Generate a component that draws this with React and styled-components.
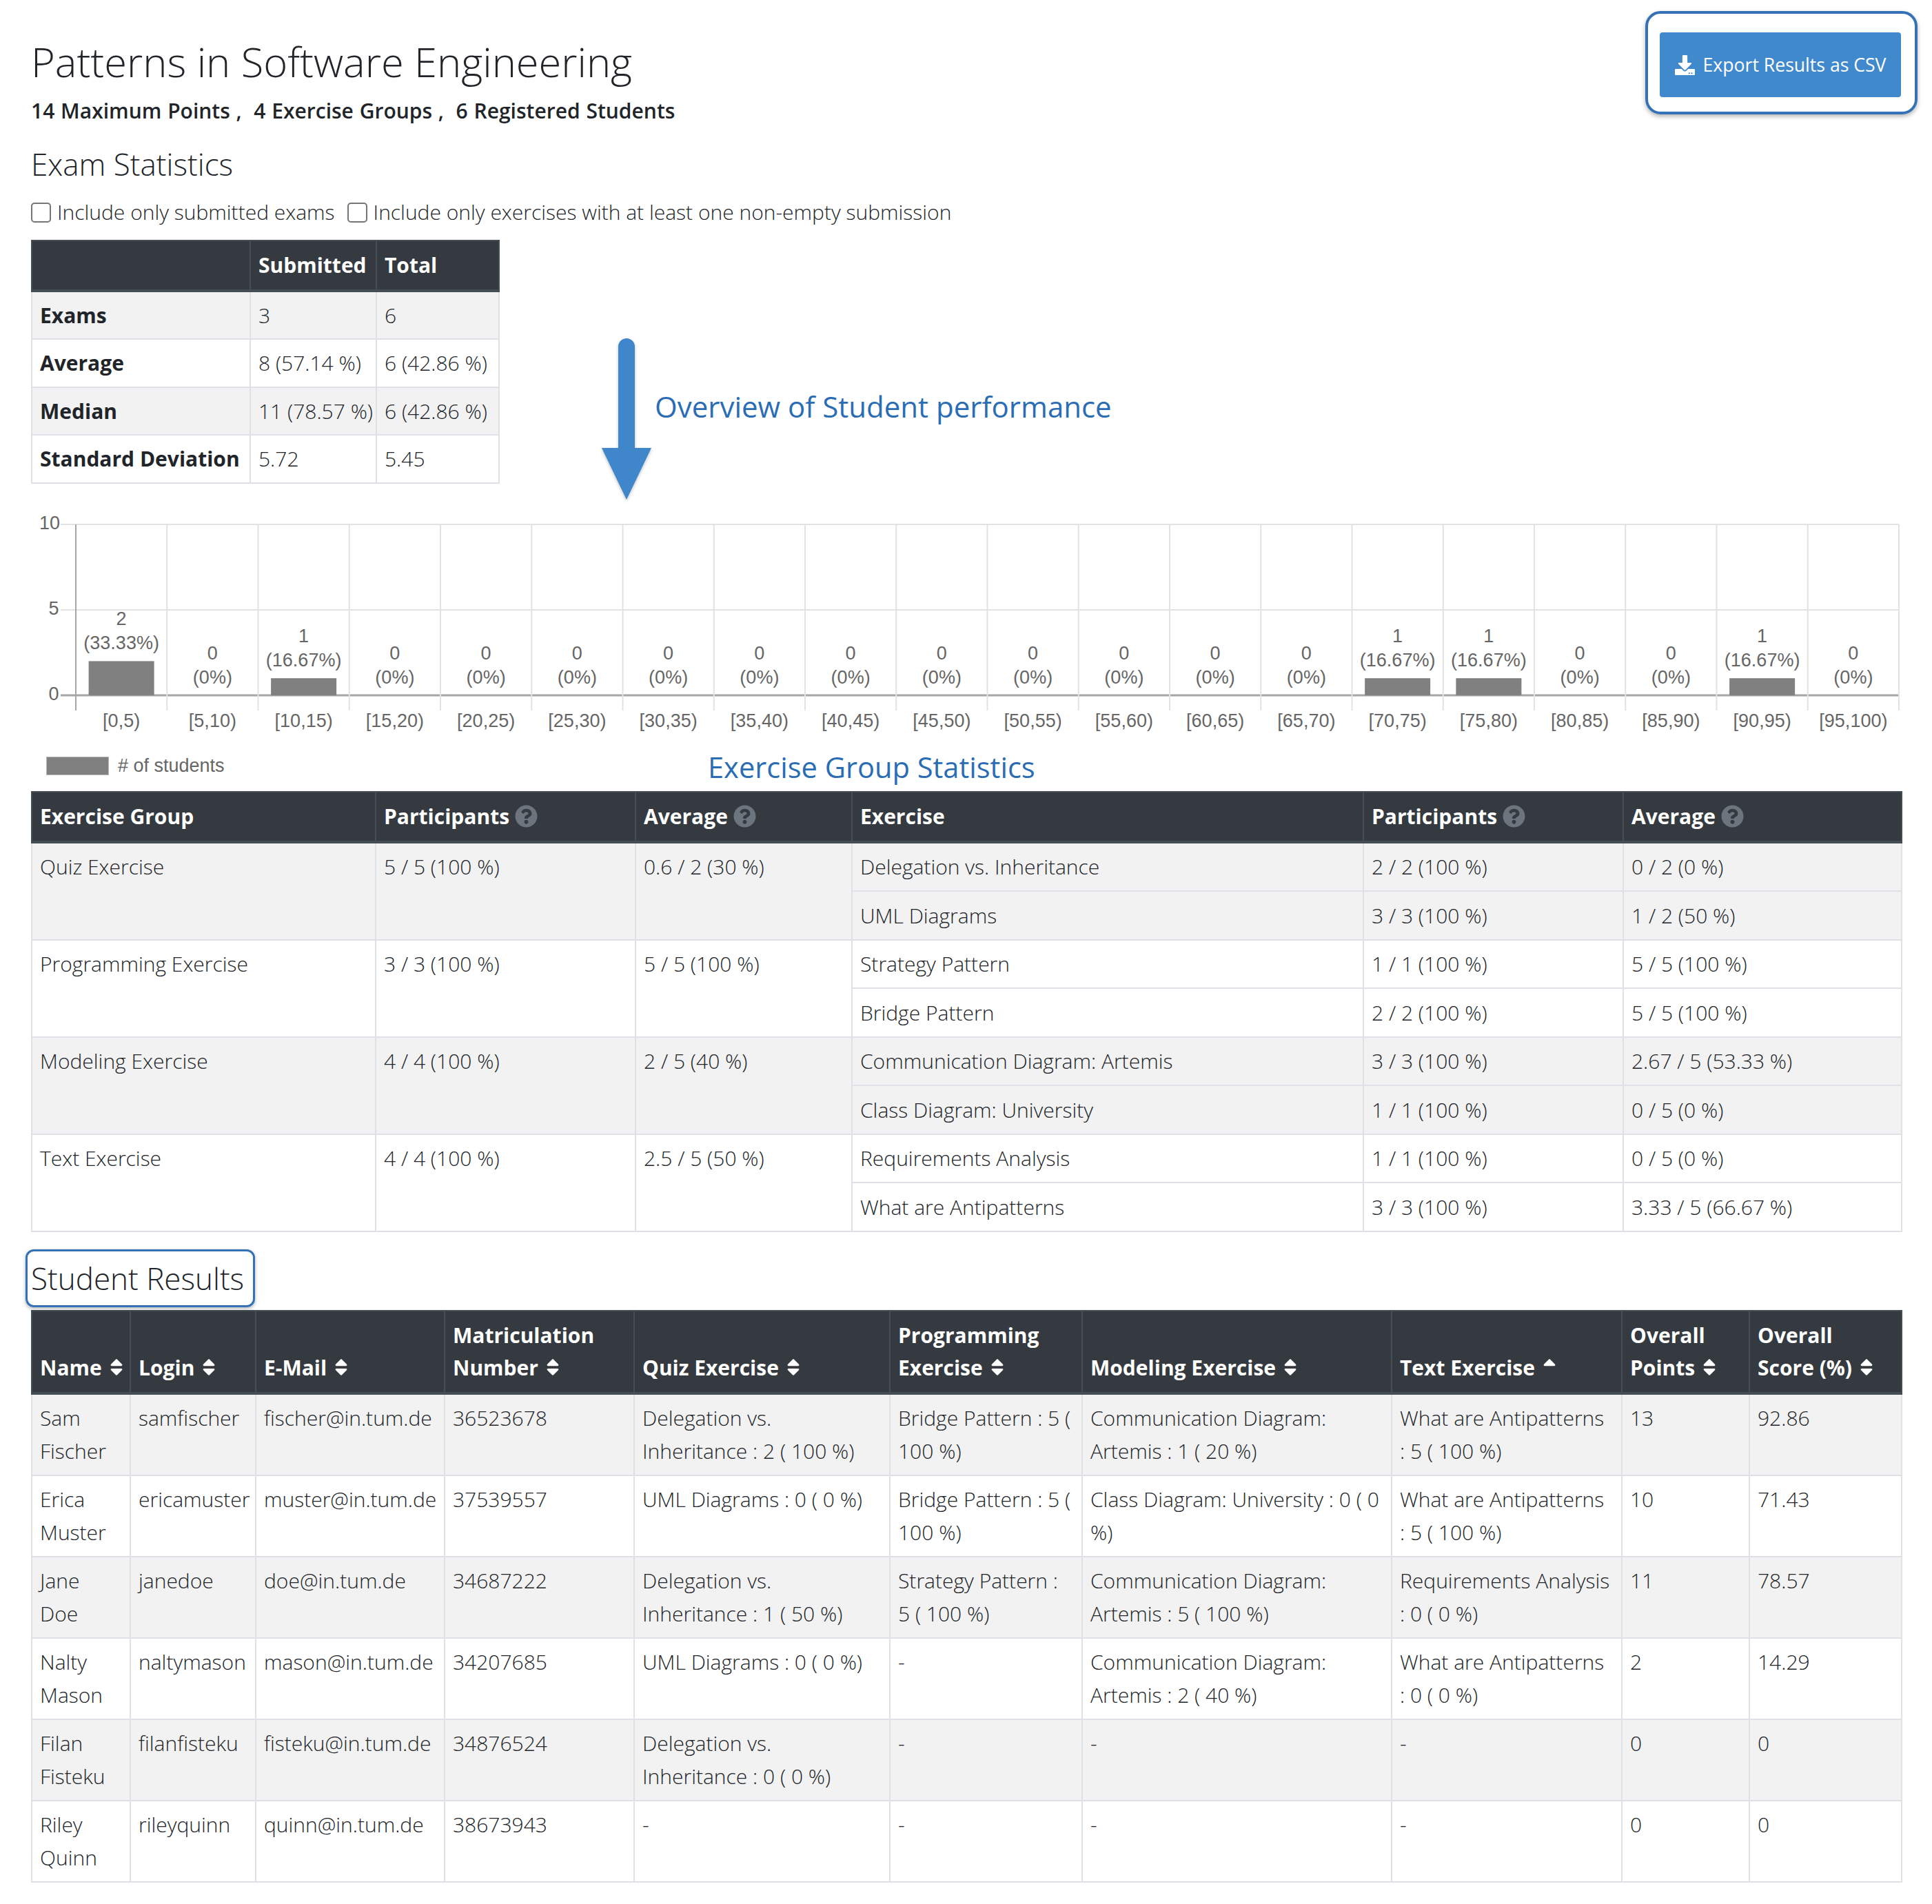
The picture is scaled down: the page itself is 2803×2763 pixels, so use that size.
import React from 'react';
import styled, { createGlobalStyle } from 'styled-components';
import { FaDownload, FaQuestionCircle, FaSort, FaSortUp } from 'react-icons/fa';

const GlobalStyle = createGlobalStyle`
  body {
    margin: 0;
    background: #fff;
    color: #212529;
    font-family: "Open Sans", "Liberation Sans", sans-serif;
    font-weight: 300;
    font-size: 30px;
    line-height: 47.5px;
  }
`;

const Page = styled.div`
  width: 2713px;
  padding: 46px 45px 32px;
`;

const Header = styled.header`
  display: flex;
  justify-content: space-between;
  align-items: flex-start;
`;

const Title = styled.h1`
  margin: 0;
  font-size: 59.6px;
  font-weight: 300;
  line-height: 86px;
`;

const Subtitle = styled.div`
  margin-top: 5px;
  font-size: 30px;
  font-weight: 600;
  line-height: 48px;
  word-spacing: 1px;
  white-space: pre;
`;

const ExportButton = styled.button`
  position: relative;
  width: 350px;
  height: 94px;
  margin-top: 1px;
  border: 0;
  border-radius: 4px;
  background: #4189cd;
  color: #fff;
  font: 400 26.6px "Open Sans", sans-serif;
  display: flex;
  align-items: center;
  justify-content: center;
  gap: 12px;
  &::after {
    content: "";
    position: absolute;
    inset: -31px -24px -25px -21px;
    border: 4px solid #3571b5;
    border-radius: 22px;
    box-shadow: 0 3px 6px rgba(0, 0, 0, 0.3);
  }
`;

const SectionTitle = styled.h2`
  margin: 0;
  font-size: 44px;
  font-weight: 300;
  line-height: 66px;
`;

const ExamTitle = styled(SectionTitle)`
  margin-top: 20px;
`;

const Filters = styled.div`
  display: flex;
  align-items: center;
  gap: 18px;
  margin-top: 13px;
  height: 48px;
`;

const FilterLabel = styled.label`
  display: flex;
  align-items: center;
  gap: 9px;
`;

const Checkbox = styled.input.attrs({ type: 'checkbox' })`
  appearance: none;
  width: 29px;
  height: 29px;
  margin: 0;
  border: 2px solid #767676;
  border-radius: 5px;
  background: #fff;
`;

const StatsRow = styled.div`
  display: flex;
  align-items: flex-start;
  margin-top: 16px;
`;

const DownArrow = styled.svg`
  width: 72px;
  height: 234px;
  margin: 143px 0 0 148px;
  filter: drop-shadow(0 2px 2px rgba(0, 0, 0, 0.25));
`;

const Note = styled.div`
  color: #2a6db5;
  font-size: 42px;
  font-weight: 400;
  line-height: 60px;
  white-space: nowrap;
`;

const OverviewNote = styled(Note)`
  margin: 212px 0 0 5px;
`;

const GroupNote = styled(Note)`
  margin-left: -1px;
  padding-top: 3px;
  font-size: 41.6px;
`;

const Table = styled.table`
  border-collapse: collapse;
  table-layout: fixed;
  width: ${(p) => p.$width}px;
  th, td {
    padding: ${(p) => p.$padY || 10.5}px 11px;
    border: 2px solid #dee2e6;
    vertical-align: top;
    text-align: left;
    white-space: pre;
  }
  thead th {
    padding-top: 11px;
    padding-bottom: 11px;
    background: #343a40;
    border-color: #454d55;
    border-bottom-width: 4px;
    color: #fff;
    font-weight: 700;
    vertical-align: bottom;
  }
  tbody th {
    font-weight: 700;
  }
`;

const GroupTable = styled(Table)`
  margin-top: 12px;
`;

const Row = styled.tr`
  background: ${(p) => (p.$striped ? '#f2f2f2' : '#fff')};
`;

const HelpIcon = styled(FaQuestionCircle)`
  color: #6c757d;
  font-size: 33px;
  margin-left: 8px;
  vertical-align: -5px;
`;

const SortIcon = styled.span`
  display: inline-block;
  margin-left: 6px;
  font-size: 30px;
  line-height: 1;
  vertical-align: -3px;
`;

const ChartSvg = styled.svg`
  display: block;
  width: 2713px;
  height: 340px;
  margin-top: 16px;
  font-family: "Liberation Sans", Arial, sans-serif;
  font-size: 27px;
  text {
    fill: #666;
    text-anchor: middle;
  }
`;

const LegendRow = styled.div`
  display: flex;
  align-items: center;
  height: 50px;
  margin-top: 5px;
  padding-left: 22px;
`;

const LegendSwatch = styled.span`
  width: 91px;
  height: 27px;
  background: #808080;
  border: 1px solid #b9b9b9;
  box-sizing: border-box;
`;

const LegendText = styled.span`
  margin-left: 13px;
  width: 857px;
  color: #666;
  font: 27px "Liberation Sans", Arial, sans-serif;
`;

const ResultsTitle = styled(SectionTitle)`
  position: relative;
  display: inline-block;
  line-height: 70px;
  margin-top: 32px;
  &::after {
    content: "";
    position: absolute;
    inset: -7px -16px -7px -8px;
    border: 3px solid #3571b5;
    border-radius: 12px;
    box-shadow: 0 2px 5px rgba(0, 0, 0, 0.3);
  }
`;

const ResultsWrap = styled.div`
  margin-top: 11px;
`;

const bins = [
  [2, '33.33'], [0, '0'], [1, '16.67'], [0, '0'], [0, '0'], [0, '0'], [0, '0'], [0, '0'], [0, '0'], [0, '0'],
  [0, '0'], [0, '0'], [0, '0'], [0, '0'], [1, '16.67'], [1, '16.67'], [0, '0'], [0, '0'], [1, '16.67'], [0, '0'],
];

const OriginX = 65;
const Step = 132.25;
const top = 20;
const unit = 24.8;
const base = top + 248;

const Chart = () => (
  <ChartSvg viewBox="0 0 2713 340">
    {[10, 5, 0].map((v) => (
      <g key={v}>
        <line x1={43} x2={2710} y1={base - v * unit} y2={base - v * unit} stroke={v === 0 ? '#a6a6a6' : '#e2e2e2'} strokeWidth={v === 0 ? 3 : 2} />
        <text x={v === 10 ? 27 : 33} y={base - v * unit + 7}>{v}</text>
      </g>
    ))}
    {bins.map(([n, pct], i) => {
      const x = OriginX + Step * i;
      const mid = x + Step / 2;
      const h = n * unit;
      return (
        <g key={i}>
          <line x1={x} x2={x} y1={top} y2={base + 22} stroke={i === 0 ? '#a6a6a6' : '#e2e2e2'} strokeWidth={2} />
          {n > 0 && <rect x={mid - 47.5} y={base - h} width={95} height={h} fill="#808080" />}
          <text x={mid} y={base - h - 52}>{n}</text>
          <text x={mid} y={base - h - 17}>({pct}%)</text>
          <text x={mid} y={base + 46}>[{i * 5},{i * 5 + 5})</text>
        </g>
      );
    })}
    <line x1={OriginX + Step * 20} x2={OriginX + Step * 20} y1={top} y2={base + 22} stroke="#e2e2e2" strokeWidth={2} />
  </ChartSvg>
);

const groups = [
  ['Quiz Exercise', '5 / 5 (100 %)', '0.6 / 2 (30 %)', [
    ['Delegation vs. Inheritance', '2 / 2 (100 %)', '0 / 2 (0 %)'],
    ['UML Diagrams', '3 / 3 (100 %)', '1 / 2 (50 %)'],
  ]],
  ['Programming Exercise', '3 / 3 (100 %)', '5 / 5 (100 %)', [
    ['Strategy Pattern', '1 / 1 (100 %)', '5 / 5 (100 %)'],
    ['Bridge Pattern', '2 / 2 (100 %)', '5 / 5 (100 %)'],
  ]],
  ['Modeling Exercise', '4 / 4 (100 %)', '2 / 5 (40 %)', [
    ['Communication Diagram: Artemis', '3 / 3 (100 %)', '2.67 / 5 (53.33 %)'],
    ['Class Diagram: University', '1 / 1 (100 %)', '0 / 5 (0 %)'],
  ]],
  ['Text Exercise', '4 / 4 (100 %)', '2.5 / 5 (50 %)', [
    ['Requirements Analysis', '1 / 1 (100 %)', '0 / 5 (0 %)'],
    ['What are Antipatterns', '3 / 3 (100 %)', '3.33 / 5 (66.67 %)'],
  ]],
];

const students = [
  ['Sam\nFischer', 'samfischer', 'fischer@in.tum.de', '36523678', 'Delegation vs.\nInheritance : 2 ( 100 %)', 'Bridge Pattern : 5 (\n100 %)', 'Communication Diagram:\nArtemis : 1 ( 20 %)', 'What are Antipatterns\n: 5 ( 100 %)', '13', '92.86'],
  ['Erica\nMuster', 'ericamuster', 'muster@in.tum.de', '37539557', 'UML Diagrams : 0 ( 0 %)', 'Bridge Pattern : 5 (\n100 %)', 'Class Diagram: University : 0 ( 0\n%)', 'What are Antipatterns\n: 5 ( 100 %)', '10', '71.43'],
  ['Jane\nDoe', 'janedoe', 'doe@in.tum.de', '34687222', 'Delegation vs.\nInheritance : 1 ( 50 %)', 'Strategy Pattern :\n5 ( 100 %)', 'Communication Diagram:\nArtemis : 5 ( 100 %)', 'Requirements Analysis\n: 0 ( 0 %)', '11', '78.57'],
  ['Nalty\nMason', 'naltymason', 'mason@in.tum.de', '34207685', 'UML Diagrams : 0 ( 0 %)', '-', 'Communication Diagram:\nArtemis : 2 ( 40 %)', 'What are Antipatterns\n: 0 ( 0 %)', '2', '14.29'],
  ['Filan\nFisteku', 'filanfisteku', 'fisteku@in.tum.de', '34876524', 'Delegation vs.\nInheritance : 0 ( 0 %)', '-', '-', '-', '0', '0'],
  ['Riley\nQuinn', 'rileyquinn', 'quinn@in.tum.de', '38673943', '-', '-', '-', '-', '0', '0'],
];

const studentCols = [
  ['Name', 143], ['Login', 182], ['E-Mail', 274], ['Matriculation\nNumber', 275], ['Quiz Exercise', 371],
  ['Programming\nExercise', 279], ['Modeling Exercise', 449], ['Text Exercise', 334, true], ['Overall\nPoints', 185], ['Overall\nScore (%)', 221],
];

const examRows = [
  ['Exams', '3', '6'],
  ['Average', '8 (57.14 %)', '6 (42.86 %)'],
  ['Median', '11 (78.57 %)', '6 (42.86 %)'],
  ['Standard Deviation', '5.72', '5.45'],
];

const Widths = ({ list }) => (
  <colgroup>
    {list.map((w, i) => <col key={i} width={w} />)}
  </colgroup>
);

const App = () => (
  <Page>
    <GlobalStyle />
    <Header>
      <div>
        <Title>Patterns in Software Engineering</Title>
        <Subtitle>14 Maximum Points ,  4 Exercise Groups ,  6 Registered Students</Subtitle>
      </div>
      <ExportButton><FaDownload size={29} />Export Results as CSV</ExportButton>
    </Header>

    <ExamTitle>Exam Statistics</ExamTitle>
    <Filters>
      <FilterLabel><Checkbox />Include only submitted exams</FilterLabel>
      <FilterLabel><Checkbox />Include only exercises with at least one non-empty submission</FilterLabel>
    </Filters>

    <StatsRow>
      <Table $width={678} $padY={10}>
        <Widths list={[317, 183, 178]} />
        <thead>
          <tr><th /><th>Submitted</th><th>Total</th></tr>
        </thead>
        <tbody>
          {examRows.map((r, i) => (
            <Row key={r[0]} $striped={i % 2 === 0}>
              <th>{r[0]}</th><td>{r[1]}</td><td>{r[2]}</td>
            </Row>
          ))}
        </tbody>
      </Table>
      <DownArrow viewBox="0 0 72 234">
        <path d="M24 12a12 12 0 0 1 24 0V159h24L36 234 0 159H24Z" fill="#3f86cb" />
      </DownArrow>
      <OverviewNote>Overview of Student performance</OverviewNote>
    </StatsRow>

    <Chart />

    <LegendRow>
      <LegendSwatch />
      <LegendText># of students</LegendText>
      <GroupNote>Exercise Group Statistics</GroupNote>
    </LegendRow>

    <GroupTable $width={2713}>
      <Widths list={[499, 377, 314, 742, 377, 404]} />
      <thead>
        <tr>
          <th>Exercise Group</th>
          <th>Participants<HelpIcon /></th>
          <th>Average<HelpIcon /></th>
          <th>Exercise</th>
          <th>Participants<HelpIcon /></th>
          <th>Average<HelpIcon /></th>
        </tr>
      </thead>
      <tbody>
        {groups.map(([name, part, avg, items], g) =>
          items.map((item, i) => (
            <Row key={item[0]} $striped={g % 2 === 0}>
              {i === 0 && <td rowSpan={2}>{name}</td>}
              {i === 0 && <td rowSpan={2}>{part}</td>}
              {i === 0 && <td rowSpan={2}>{avg}</td>}
              <td>{item[0]}</td><td>{item[1]}</td><td>{item[2]}</td>
            </Row>
          ))
        )}
      </tbody>
    </GroupTable>

    <ResultsTitle>Student Results</ResultsTitle>
    <ResultsWrap>
      <Table $width={2713}>
        <Widths list={studentCols.map((c) => c[1])} />
        <thead>
          <tr>
            {studentCols.map(([label, , sorted]) => (
              <th key={label}>
                {label}
                <SortIcon>{sorted ? <FaSortUp /> : <FaSort />}</SortIcon>
              </th>
            ))}
          </tr>
        </thead>
        <tbody>
          {students.map((s, i) => (
            <Row key={s[1]} $striped={i % 2 === 0}>
              {s.map((c, j) => <td key={j}>{c}</td>)}
            </Row>
          ))}
        </tbody>
      </Table>
    </ResultsWrap>
  </Page>
);

export default App;
